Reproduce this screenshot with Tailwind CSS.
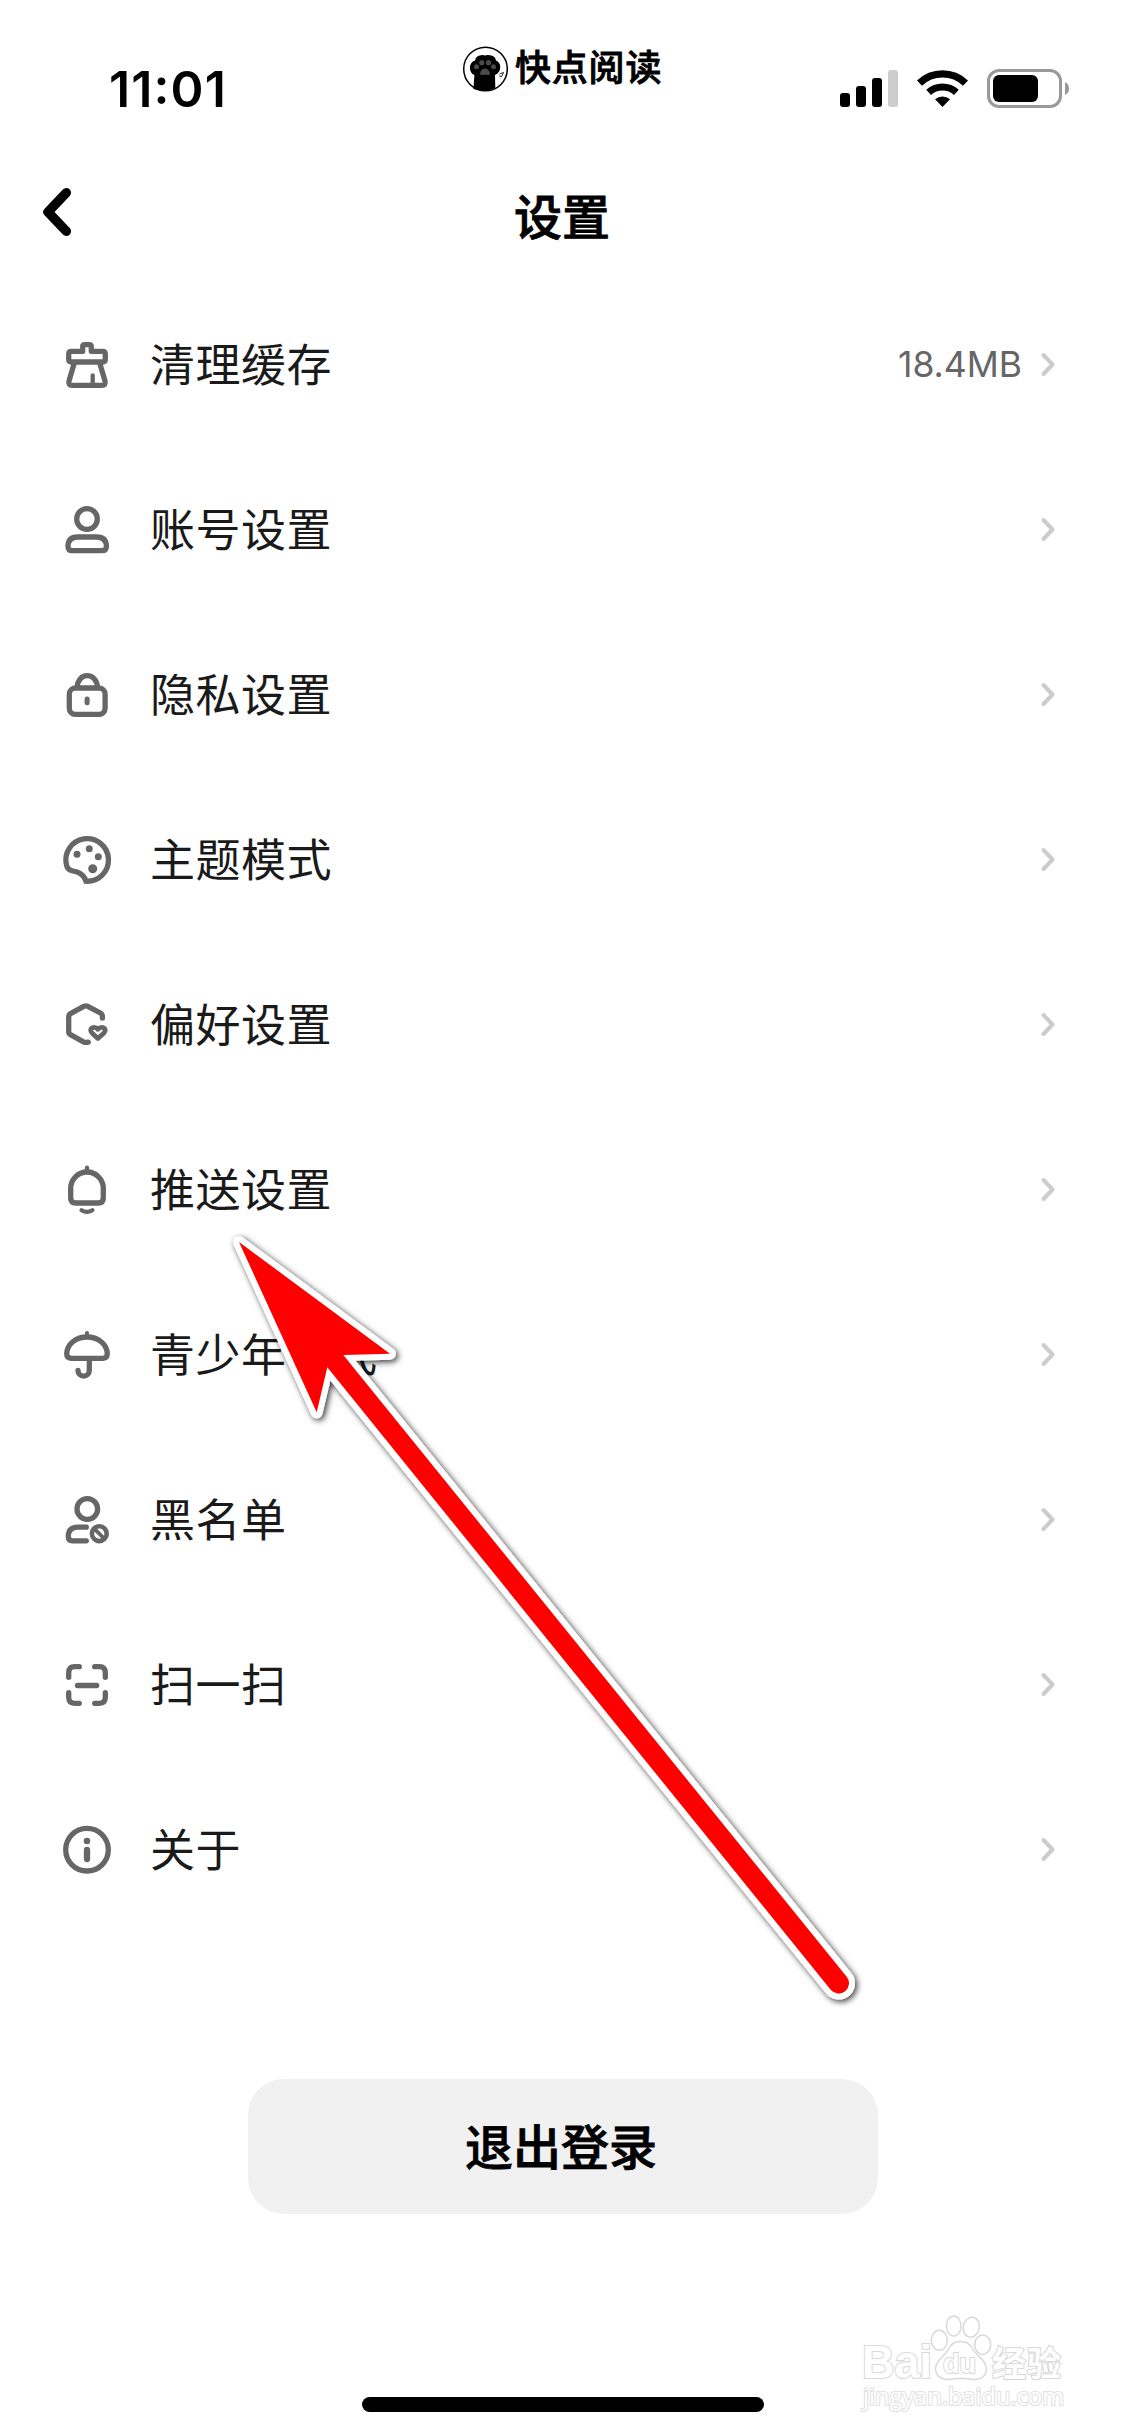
<!DOCTYPE html>
<html lang="zh-CN">
<head>
<meta charset="utf-8">
<title>设置</title>
<script src="https://cdn.jsdelivr.net/npm/@tailwindcss/browser@4"></script>
</head>
<body class="bg-white">
<div class="relative flex h-[2436px] w-[1125px] flex-col overflow-hidden bg-white font-['Inter','Noto_Sans_CJK_SC',sans-serif] text-[#1a1a1a]">

  <!-- Status bar -->
  <header class="flex h-[132px] shrink-0 justify-between pt-[42px] pr-[54px] pl-[109px] text-black">
    <div class="w-[351px] pt-[16px] text-[50px] leading-[62px] font-semibold tracking-[1.1px]">11<span class="relative -top-[3px]">:</span>01</div>
    <div class="flex h-[52px] flex-1 items-center">
      <svg class="h-[48px] w-[48px] shrink-0" viewBox="0 0 48 48" fill="none">
        <circle cx="25.5" cy="25" r="21.8" stroke="#000" stroke-width="1.5"/>
        <path d="M13.4 45 L14.4 31 Q9.5 29 10 22.5 Q11 17.5 15 16.5 Q16 11.5 21 11.3 Q23 10.5 25 11.6 Q27 10.5 30 11.3 Q35 11.5 36 16.5 Q40 18 40.3 23 Q40 29 35 31 L35.3 44 Q25 49 13.4 45Z" fill="#000"/>
        <g fill="#4a4a4a"><circle cx="16.5" cy="22.8" r="2.5"/><circle cx="21.8" cy="18.7" r="2.6"/><circle cx="28.6" cy="18.7" r="2.6"/><circle cx="33.5" cy="22.8" r="2.5"/><path d="M25 24.5q3 0 4.8 4q.6 2.7-2 2.6q-2.8-.7-5.6 0q-2.600 0-2-2.600q1.800-4 4.800-4z"/></g>
        <path d="M39.500 30l4-1.500-1.800 4-2.500-.5" stroke="#222" stroke-width="1"/>
      </svg>
      <span class="ml-[7px] text-[36px] leading-[52px] font-medium tracking-[0.8px] [-webkit-text-stroke:0.8px_#000]">快点阅读</span>
    </div>
    <svg class="mt-[22px] h-[50px] w-[231px] shrink-0" viewBox="840 64 231 50">
      <rect x="840" y="93" width="10" height="14" rx="3"/>
      <rect x="856" y="86" width="10" height="21" rx="3"/>
      <rect x="872" y="78" width="10" height="29" rx="3"/>
      <rect x="888" y="70" width="10" height="37" rx="3" fill="#ccc"/>
      <g fill="none" stroke="#000">
        <path d="M919.500 83.200A33.200 33.200 0 0 1 965.500 83.200" stroke-width="7.200"/>
        <path d="M928.600 92.300A20.600 20.600 0 0 1 956.400 92.300" stroke-width="7"/>
      </g>
      <path d="M942.500 107L935 99.200A11.500 11.500 0 0 1 950 99.200Z"/>
      <rect x="988.500" y="70.500" width="72" height="36" rx="10.500" fill="none" stroke="#999" stroke-width="3"/>
      <rect x="993" y="75" width="45" height="27" rx="6"/>
      <path d="M1065 82q4 2 4 6.500t-4 6.500z" fill="#999"/>
    </svg>
  </header>

  <!-- Navigation bar -->
  <nav class="grid h-[150px] shrink-0 grid-cols-3 text-black">
    <svg class="mt-[50px] ml-[35px] h-[60px] w-[45px]" viewBox="0 0 45 60" fill="none" stroke="#000" stroke-width="9.500" stroke-linecap="round" stroke-linejoin="round"><path d="M31.300 10.700L13 30L31.300 49.300"/></svg>
    <h1 class="pt-[51px] pr-px text-center text-[48px] leading-[70px] font-medium [-webkit-text-stroke:0.8px_#000]">设置</h1>
  </nav>

  <!-- Settings list -->
  <main class="flex flex-col">
    <a class="flex h-[165px] items-center pr-[68px] pl-[57px]">
      <svg class="h-[61px] w-[61px]" viewBox="0 0 61 61" fill="none" stroke="#666" stroke-width="5.300" stroke-linecap="round" stroke-linejoin="round"><path d="M14.500 17.300H25.700V12.700q0-2 2-2h4.600q2 0 2 2V17.300H45.500q2.800 0 2.800 2.800V25.200q0 2.800-2.800 2.800H14.500q-2.800 0-2.800-2.800V20.100q0-2.800 2.800-2.800zM17 30L12 47q-1 4.300 3 4.300h30q4 0 3-4.300L43 30"/><path d="M35.700 41.500V50" stroke-width="4.300"/></svg>
      <span class="ml-[32px] flex-1 pt-[3px] text-[45px] leading-[66px] tracking-[0.5px]">清理缓存</span>
      <span class="mr-[17px] text-[35.5px] leading-[44px] text-[#666]">18.4MB</span>
      <svg class="h-[29px] w-[18px]" viewBox="0 0 18 29" fill="none" stroke="#ccc" stroke-width="4" stroke-linecap="round" stroke-linejoin="round"><path d="M4.500 5L13.500 14.500L4.500 24"/></svg>
    </a>
    <a class="flex h-[165px] items-center pr-[68px] pl-[57px]">
      <svg class="h-[61px] w-[61px]" viewBox="0 0 61 61" fill="none" stroke="#666" stroke-width="5.300" stroke-linejoin="round"><circle cx="30" cy="20" r="10.300"/><path d="M20.500 38h19q9.900 0 9.900 9.500q0 4.200-4.500 4.200H15.500q-4.500 0-4.500-4.200q0-9.500 9.500-9.500z"/></svg>
      <span class="ml-[32px] flex-1 pt-[3px] text-[45px] leading-[66px] tracking-[0.5px]">账号设置</span>
      <svg class="h-[29px] w-[18px]" viewBox="0 0 18 29" fill="none" stroke="#ccc" stroke-width="4" stroke-linecap="round" stroke-linejoin="round"><path d="M4.500 5L13.500 14.500L4.500 24"/></svg>
    </a>
    <a class="flex h-[165px] items-center pr-[68px] pl-[57px]">
      <svg class="h-[61px] w-[61px]" viewBox="0 0 61 61" fill="none" stroke="#666" stroke-width="5.300" stroke-linecap="round"><rect x="12.300" y="24" width="35.800" height="26.300" rx="6"/><path d="M20.300 23a10 11.300 0 0 1 20 0"/><path d="M30.100 34.900V38.700" stroke-width="5"/></svg>
      <span class="ml-[32px] flex-1 pt-[3px] text-[45px] leading-[66px] tracking-[0.5px]">隐私设置</span>
      <svg class="h-[29px] w-[18px]" viewBox="0 0 18 29" fill="none" stroke="#ccc" stroke-width="4" stroke-linecap="round" stroke-linejoin="round"><path d="M4.500 5L13.500 14.500L4.500 24"/></svg>
    </a>
    <a class="flex h-[165px] items-center pr-[68px] pl-[57px]">
      <svg class="h-[61px] w-[61px]" viewBox="0 0 61 61" fill="none"><path d="M29 52.200A21.300 21.300 0 1 0 9.600 36.500Q10.500 40.500 15 41.700L20 43Q27 45.500 29 52.200z" stroke="#666" stroke-width="5.300"/><g fill="#666"><circle cx="20" cy="25.300" r="3.500"/><circle cx="32.300" cy="19.700" r="3.500"/><circle cx="41.300" cy="27.700" r="3.500"/><circle cx="35.700" cy="39.700" r="4.500"/></g></svg>
      <span class="ml-[32px] flex-1 pt-[3px] text-[45px] leading-[66px] tracking-[0.5px]">主题模式</span>
      <svg class="h-[29px] w-[18px]" viewBox="0 0 18 29" fill="none" stroke="#ccc" stroke-width="4" stroke-linecap="round" stroke-linejoin="round"><path d="M4.500 5L13.500 14.500L4.500 24"/></svg>
    </a>
    <a class="flex h-[165px] items-center pr-[68px] pl-[57px]">
      <svg class="h-[61px] w-[61px]" viewBox="0 0 61 61" fill="none" stroke="#666" stroke-width="5.300" stroke-linecap="round" stroke-linejoin="round"><path d="M45.400 24v-1.500q0-2.400-2-3.500l-12.600-6.600q-2-1-4 0l-12.900 7q-2.200 1.200-2.200 3.500v14.500q0 2.400 2.200 3.500l12.500 7q2 1 4.800.2"/><path d="M40.900 44.500L35 38.900q-2.800-3.200.2-5q3-1.400 5.700 1.400q2.800-2.800 5.800-1.400q3 1.800.2 5z" stroke-width="4.800"/></svg>
      <span class="ml-[32px] flex-1 pt-[3px] text-[45px] leading-[66px] tracking-[0.5px]">偏好设置</span>
      <svg class="h-[29px] w-[18px]" viewBox="0 0 18 29" fill="none" stroke="#ccc" stroke-width="4" stroke-linecap="round" stroke-linejoin="round"><path d="M4.500 5L13.500 14.500L4.500 24"/></svg>
    </a>
    <a class="flex h-[165px] items-center pr-[68px] pl-[57px]">
      <svg class="h-[61px] w-[61px]" viewBox="0 0 61 61" fill="none" stroke="#666" stroke-width="5.300" stroke-linecap="round"><path d="M13.700 29.300a16.300 16.300 0 0 1 32.600 0v9.700q0 5-5 5H18.700q-5 0-5-5z"/><path d="M30 8.700V12M24.600 51.200q5.400 3.400 10.800 0" stroke-width="4.300"/></svg>
      <span class="ml-[32px] flex-1 pt-[3px] text-[45px] leading-[66px] tracking-[0.5px]">推送设置</span>
      <svg class="h-[29px] w-[18px]" viewBox="0 0 18 29" fill="none" stroke="#ccc" stroke-width="4" stroke-linecap="round" stroke-linejoin="round"><path d="M4.500 5L13.500 14.500L4.500 24"/></svg>
    </a>
    <a class="flex h-[165px] items-center pr-[68px] pl-[57px]">
      <svg class="h-[61px] w-[61px]" viewBox="0 0 61 61" fill="none" stroke="#666" stroke-width="5.300" stroke-linecap="round"><path d="M14 34.300H46q4.300-.3 4.300-4.500C50 20 41 13 30 13S10 20 9.700 29.800q0 4.200 4.300 4.500z"/><path d="M32.300 35V46.500a5.650 5.650 0 0 1-11.300 0"/><path d="M30 9V12" stroke-width="4"/></svg>
      <span class="ml-[32px] flex-1 pt-[3px] text-[45px] leading-[66px] tracking-[0.5px]">青少年模式</span>
      <svg class="h-[29px] w-[18px]" viewBox="0 0 18 29" fill="none" stroke="#ccc" stroke-width="4" stroke-linecap="round" stroke-linejoin="round"><path d="M4.500 5L13.500 14.500L4.500 24"/></svg>
    </a>
    <a class="flex h-[165px] items-center pr-[68px] pl-[57px]">
      <svg class="h-[61px] w-[61px]" viewBox="0 0 61 61" fill="none" stroke="#666" stroke-width="5.300" stroke-linecap="round"><circle cx="30.300" cy="20" r="10.300"/><path d="M29.300 38.200H20.500Q11.300 38.500 11.300 47.500Q11.300 51.800 15.500 51.800H29.300"/><circle cx="42.300" cy="44.700" r="7.400" stroke-width="4.600"/><path d="M37.500 39.900L47.100 49.500" stroke-width="3.800"/></svg>
      <span class="ml-[32px] flex-1 pt-[3px] text-[45px] leading-[66px] tracking-[0.5px]">黑名单</span>
      <svg class="h-[29px] w-[18px]" viewBox="0 0 18 29" fill="none" stroke="#ccc" stroke-width="4" stroke-linecap="round" stroke-linejoin="round"><path d="M4.500 5L13.500 14.500L4.500 24"/></svg>
    </a>
    <a class="flex h-[165px] items-center pr-[68px] pl-[57px]">
      <svg class="h-[61px] w-[61px]" viewBox="0 0 61 61" fill="none" stroke="#666" stroke-width="5.300" stroke-linecap="round"><path d="M22.300 12.700H17.700q-6 0-6 6V23.300M37.700 12.700H42.300q6 0 6 6V23.300M22.300 49.300H17.700q-6 0-6-6V38.700M37.700 49.300H42.300q6 0 6-6V38.700M20.500 31.500H39.700"/></svg>
      <span class="ml-[32px] flex-1 pt-[3px] text-[45px] leading-[66px] tracking-[0.5px]">扫一扫</span>
      <svg class="h-[29px] w-[18px]" viewBox="0 0 18 29" fill="none" stroke="#ccc" stroke-width="4" stroke-linecap="round" stroke-linejoin="round"><path d="M4.500 5L13.500 14.500L4.500 24"/></svg>
    </a>
    <a class="flex h-[165px] items-center pr-[68px] pl-[57px]">
      <svg class="h-[61px] w-[61px]" viewBox="0 0 61 61" fill="none" stroke="#666" stroke-width="5.300" stroke-linecap="round"><circle cx="30" cy="30.700" r="21.300"/><circle cx="30" cy="22" r="3.300" fill="#666" stroke="none"/><path d="M30 30.900V40.100" stroke-width="6.300"/></svg>
      <span class="ml-[32px] flex-1 pt-[3px] text-[45px] leading-[66px] tracking-[0.5px]">关于</span>
      <svg class="h-[29px] w-[18px]" viewBox="0 0 18 29" fill="none" stroke="#ccc" stroke-width="4" stroke-linecap="round" stroke-linejoin="round"><path d="M4.500 5L13.500 14.500L4.500 24"/></svg>
    </a>
  </main>

  <button class="mt-[147px] ml-[248px] flex h-[135px] w-[630px] shrink-0 items-center justify-center rounded-[36px] bg-[#f1f1f1] pt-[2px] pr-[4px] text-[48px] leading-[70px] font-medium text-black [-webkit-text-stroke:0.8px_#000]">退出登录</button>

  <div class="mt-[183px] ml-[362px] h-[15px] w-[402px] shrink-0 rounded-full bg-black"></div>

  <!-- Watermark -->
  <svg class="absolute top-[2300px] left-[850px] h-[120px] w-[230px]" viewBox="850 2300 230 120" fill="#fff" stroke="#d9d9d9" stroke-width="1.500">
    <g stroke-width="2.200" paint-order="stroke">
      <text x="862" y="2378" font-family="Liberation Sans, sans-serif" font-weight="700" font-size="46" textLength="70" lengthAdjust="spacingAndGlyphs">Bai</text>
      <text x="992" y="2376" font-family="Noto Sans CJK SC, sans-serif" font-weight="700" font-size="34" textLength="69">经验</text>
      <text x="863" y="2405" font-family="Open Sans, sans-serif" font-size="24" stroke="#e2e2e2" textLength="201" lengthAdjust="spacingAndGlyphs">jingyan.baidu.com</text>
    </g>
    <ellipse cx="939.300" cy="2340.300" rx="8" ry="10"/>
    <ellipse cx="953.700" cy="2326" rx="7.300" ry="10"/>
    <ellipse cx="971.300" cy="2327.300" rx="8" ry="10" transform="rotate(12 971.300 2327.300)"/>
    <ellipse cx="982.700" cy="2344.700" rx="8" ry="9.700"/>
    <path d="M960.500 2341.500c6 0 10 3 12.500 8c3 6 13 10 13.500 19c0 7-5 11.300-13 11c-6-.5-9-1.200-13-1.200s-8 1.300-13 1.200c-7 0-12-4-12-11c.5-9 9.500-12 12.500-19c2.500-5 6.500-8 12.500-8z"/>
    <text x="943" y="2373" font-family="Liberation Sans, sans-serif" font-size="28" font-weight="700" stroke-width="2" paint-order="stroke" textLength="33" lengthAdjust="spacingAndGlyphs">du</text>
  </svg>

  <!-- Pointer arrow -->
  <svg class="absolute top-[1220px] left-[220px] h-[800px] w-[660px]" viewBox="220 1220 660 800">
    <defs><filter id="shadow" x="-5%" y="-5%" width="112%" height="112%"><feDropShadow dx="2" dy="2" stdDeviation="3" flood-color="#000" flood-opacity=".8"/></filter></defs>
    <path id="arrow" d="M239 1242L390 1353.700L343.300 1355L846.700 1976.800A10.300 10.300 0 0 1 830.700 1989.800L327.300 1367.300L316.700 1412.300Z" fill="#f00" stroke="#fff" stroke-width="12" stroke-linejoin="round" paint-order="stroke" filter="url(#shadow)"/>
  </svg>
</div>
</body>
</html>
